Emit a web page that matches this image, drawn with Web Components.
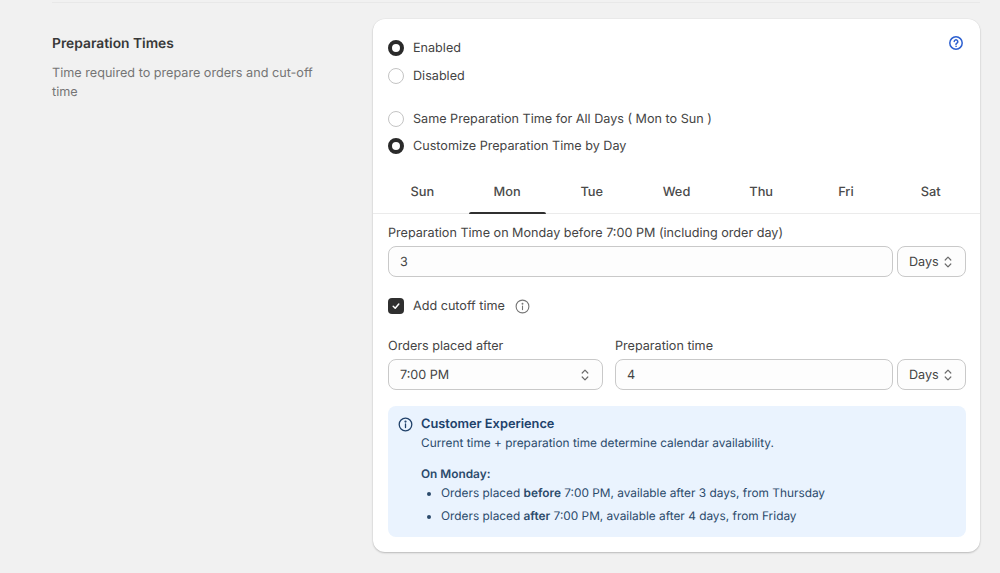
<!DOCTYPE html>
<html lang="en">
<head>
<meta charset="utf-8">
<title>Preparation Times</title>
<style>
  html, body { margin: 0; padding: 0; background: #f1f1f1; }
  body { font-family: Inter, "Liberation Sans", sans-serif; color: #303030; overflow: hidden; text-rendering: geometricPrecision; }
  info-banner li + li { margin-top: 4px; }
  info-banner b { font-weight: 600; }
</style>
</head>
<body>
<settings-section heading="Preparation Times" description="Time required to prepare orders and cut-off time">
  <form-card>
    <help-icon slot="corner"></help-icon>
    <div style="display:grid;gap:8px;margin-bottom:23px">
      <radio-option checked>Enabled</radio-option>
      <radio-option>Disabled</radio-option>
    </div>
    <div style="display:grid;gap:7px">
      <radio-option>Same Preparation Time for All Days ( Mon to Sun )</radio-option>
      <radio-option checked>Customize Preparation Time by Day</radio-option>
    </div>
    <day-tabs slot="tabs" days="Sun,Mon,Tue,Wed,Thu,Fri,Sat" active="Mon"></day-tabs>
    <div slot="body" style="display:grid;grid-template-columns:215px 1fr;column-gap:12px;padding-top:11px">
      <field-row label="Preparation Time on Monday before 7:00 PM (including order day)" value="3" style="grid-column:1 / -1"></field-row>
      <check-option style="grid-column:1 / -1;margin:19px 0 22px">Add cutoff time</check-option>
      <select-box label="Orders placed after" value="7:00 PM"></select-box>
      <field-row label="Preparation time" value="4"></field-row>
      <info-banner style="grid-column:1 / -1;margin-top:16px" heading="Customer Experience">
        <p>Current time + preparation time determine calendar availability.</p>
        <p class="day"><b>On Monday:</b></p>
        <ul>
          <li>Orders placed <b>before</b> 7:00 PM, available after 3 days, from Thursday</li>
          <li>Orders placed <b>after</b> 7:00 PM, available after 4 days, from Friday</li>
        </ul>
      </info-banner>
    </div>
  </form-card>
</settings-section>

<script>
// shared chevrons of the select boxes
const CHEVRONS = `<svg width="12" height="16" viewBox="0 0 12 16" fill="none" stroke="#6b6b6b" stroke-width="1.2" stroke-linecap="round" stroke-linejoin="round"><path d="M3.2 6 6 3.2 8.8 6"/><path d="M3.2 10 6 12.8 8.8 10"/></svg>`;

class SettingsSection extends HTMLElement {
  connectedCallback() {
    this.attachShadow({ mode: 'open' }).innerHTML = `
      <style>
        :host { display: block; height: 573px; box-sizing: border-box; padding: 2px 20px 0 52px; }
        .rule { height: 1px; background: #e8e8e8; }
        .cols { display: grid; grid-template-columns: 321px 607px; padding-top: 16px; }
        .side { padding-top: 16px; }
        h2 { margin: 0 0 11px; font-size: 13.8px; line-height: 18px; font-weight: 600; color: #383838; }
        p { margin: 0; font-size: 12.65px; line-height: 19px; color: #757575; max-width: 270px; }
      </style>
      <div class="rule"></div>
      <div class="cols">
        <div class="side">
          <h2>${this.getAttribute('heading')}</h2>
          <p>${this.getAttribute('description')}</p>
        </div>
        <slot></slot>
      </div>`;
  }
}

class FormCard extends HTMLElement {
  connectedCallback() {
    this.attachShadow({ mode: 'open' }).innerHTML = `
      <style>
        :host { display: block; position: relative; height: 533px; box-sizing: border-box; background: #fff;
          border-radius: 12px; padding-top: 19px; box-shadow: 0 1px 2px rgba(0,0,0,.22), 0 0 0 .5px rgba(0,0,0,.04); }
        .top { padding: 0 15px; }
        .corner { position: absolute; top: 17px; right: 17px; }
        .body { padding: 0 14px 0 15px; }
      </style>
      <div class="corner"><slot name="corner"></slot></div>
      <div class="top"><slot></slot></div>
      <slot name="tabs"></slot>
      <div class="body"><slot name="body"></slot></div>`;
  }
}

class HelpIcon extends HTMLElement {
  connectedCallback() {
    this.attachShadow({ mode: 'open' }).innerHTML = `
      <style>:host { display: block; width: 14px; height: 14px; } svg { display: block; }</style>
      <svg width="14" height="14" viewBox="0 0 14 14" fill="none" stroke="#2c5fd0" stroke-width="1.5" stroke-linecap="round">
        <circle cx="7" cy="7" r="6.2"/>
        <path d="M5.2 5.6a1.8 1.8 0 1 1 2.7 1.6c-.6.35-.9.7-.9 1.2"/>
        <circle cx="7" cy="10.3" r=".45" fill="#2c5fd0" stroke-width=".5"/>
      </svg>`;
  }
}

class RadioOption extends HTMLElement {
  connectedCallback() {
    const on = this.hasAttribute('checked');
    this.attachShadow({ mode: 'open' }).innerHTML = `
      <style>
        :host { display: flex; align-items: center; gap: 9px; height: 20px; font-size: 12.62px; color: #444; }
        i { width: 16px; height: 16px; box-sizing: border-box; border-radius: 50%; flex: none; background: #fff;
          border: ${on ? '4.5px solid #2a2a2a' : '1px solid #c4c4c4'}; }
        span { padding-top: 1px; }
      </style>
      <i></i><span><slot></slot></span>`;
  }
}

class DayTabs extends HTMLElement {
  connectedCallback() {
    const active = this.getAttribute('active');
    const tabs = this.getAttribute('days').split(',').map(d =>
      `<div class="tab${d === active ? ' on' : ''}">${d}</div>`).join('');
    this.attachShadow({ mode: 'open' }).innerHTML = `
      <style>
        :host { display: block; margin-top: 12px; padding: 0 7px; border-bottom: 1px solid #ebebeb; }
        .row { display: grid; grid-template-columns: repeat(7, 1fr); }
        .tab { position: relative; height: 45px; display: flex; align-items: center; justify-content: center;
          font-size: 12.8px; font-weight: 550; color: #4a4a4a; padding-top: 3px; box-sizing: border-box; }
        .on::after { content: ""; position: absolute; left: 4px; right: 3px; bottom: -1px; height: 2px; background: #303030; border-radius: 2px 2px 0 0; }
      </style>
      <div class="row">${tabs}</div>`;
  }
}

class SelectPill extends HTMLElement {
  connectedCallback() {
    this.attachShadow({ mode: 'open' }).innerHTML = `
      <style>
        :host { display: flex; align-items: center; justify-content: space-between; box-sizing: border-box; height: 31px;
          border: 1px solid #c9c9c9; border-radius: 8px; background: #fdfdfd; padding: 0 11px; font-size: 12.62px; color: #444; }
        svg { display: block; }
        span { padding-top: 1px; }
      </style>
      <span><slot></slot></span>${CHEVRONS}`;
  }
}

class FieldRow extends HTMLElement {
  connectedCallback() {
    this.attachShadow({ mode: 'open' }).innerHTML = `
      <style>
        :host { display: block; }
        label { display: block; font-size: 12.62px; line-height: 18px; margin-bottom: 3px; color: #444; }
        .row { display: grid; grid-template-columns: 1fr 69px; gap: 4px; }
        .input { box-sizing: border-box; height: 31px; border: 1px solid #c9c9c9; border-radius: 8px; background: #fdfdfd;
          padding: 0 11px; font-size: 12.62px; line-height: 31px; color: #444; }
      </style>
      <label>${this.getAttribute('label')}</label>
      <div class="row">
        <div class="input">${this.getAttribute('value')}</div>
        <select-pill>Days</select-pill>
      </div>`;
  }
}

class SelectBox extends HTMLElement {
  connectedCallback() {
    this.attachShadow({ mode: 'open' }).innerHTML = `
      <style>
        :host { display: block; }
        label { display: block; font-size: 12.62px; line-height: 18px; margin-bottom: 3px; color: #444; }
      </style>
      <label>${this.getAttribute('label')}</label>
      <select-pill>${this.getAttribute('value')}</select-pill>`;
  }
}

class CheckOption extends HTMLElement {
  connectedCallback() {
    this.attachShadow({ mode: 'open' }).innerHTML = `
      <style>
        :host { display: flex; align-items: center; height: 20px; font-size: 12.62px; color: #444; }
        .box { width: 16px; height: 16px; border-radius: 4px; background: #2f2f2f; margin-right: 9px; display: flex; align-items: center; justify-content: center; }
        svg { display: block; }
        span { padding-top: 1px; }
        .tip { margin-left: 10px; }
      </style>
      <div class="box"><svg width="10" height="10" viewBox="0 0 10 10" fill="none" stroke="#fff" stroke-width="1.5" stroke-linecap="round" stroke-linejoin="round"><path d="M2.2 5.2 4.2 7.2 7.8 3"/></svg></div>
      <span><slot></slot></span>
      <svg class="tip" width="15" height="15" viewBox="0 0 15 15" fill="none" stroke="#757575" stroke-width="1.1" stroke-linecap="round">
        <circle cx="7.5" cy="7.5" r="6.4"/><path d="M7.5 7v3.6"/><circle cx="7.5" cy="4.7" r=".4" fill="#757575"/>
      </svg>`;
  }
}

class InfoBanner extends HTMLElement {
  connectedCallback() {
    this.attachShadow({ mode: 'open' }).innerHTML = `
      <style>
        :host { display: block; box-sizing: border-box; height: 131px; background: #eaf3fe; border-radius: 8px;
          padding: 9px 10px 0 10px; color: #2b4a6b; font-size: 11.85px; }
        .wrap { display: grid; grid-template-columns: 15px 1fr; column-gap: 8px; }
        svg { display: block; margin-top: 2px; }
        h3 { margin: 1px 0 0; font-size: 12.8px; line-height: 18px; font-weight: 600; color: #20416a; }
        ::slotted(p) { margin: 0; line-height: 19px; }
        ::slotted(p.day) { margin: 12px 0 0; }
        ::slotted(ul) { margin: 0; padding: 0 0 0 20px; line-height: 19px; }
      </style>
      <div class="wrap">
        <svg width="15" height="15" viewBox="0 0 15 15" fill="none" stroke="#20416a" stroke-width="1.3" stroke-linecap="round">
          <circle cx="7.5" cy="7.5" r="6.3"/><path d="M7.5 7v3.5"/><circle cx="7.5" cy="4.6" r=".45" fill="#20416a"/>
        </svg>
        <div>
          <h3>${this.getAttribute('heading')}</h3>
          <slot></slot>
        </div>
      </div>`;
  }
}

customElements.define('settings-section', SettingsSection);
customElements.define('form-card', FormCard);
customElements.define('help-icon', HelpIcon);
customElements.define('radio-option', RadioOption);
customElements.define('day-tabs', DayTabs);
customElements.define('select-pill', SelectPill);
customElements.define('field-row', FieldRow);
customElements.define('select-box', SelectBox);
customElements.define('check-option', CheckOption);
customElements.define('info-banner', InfoBanner);
</script>
</body>
</html>
